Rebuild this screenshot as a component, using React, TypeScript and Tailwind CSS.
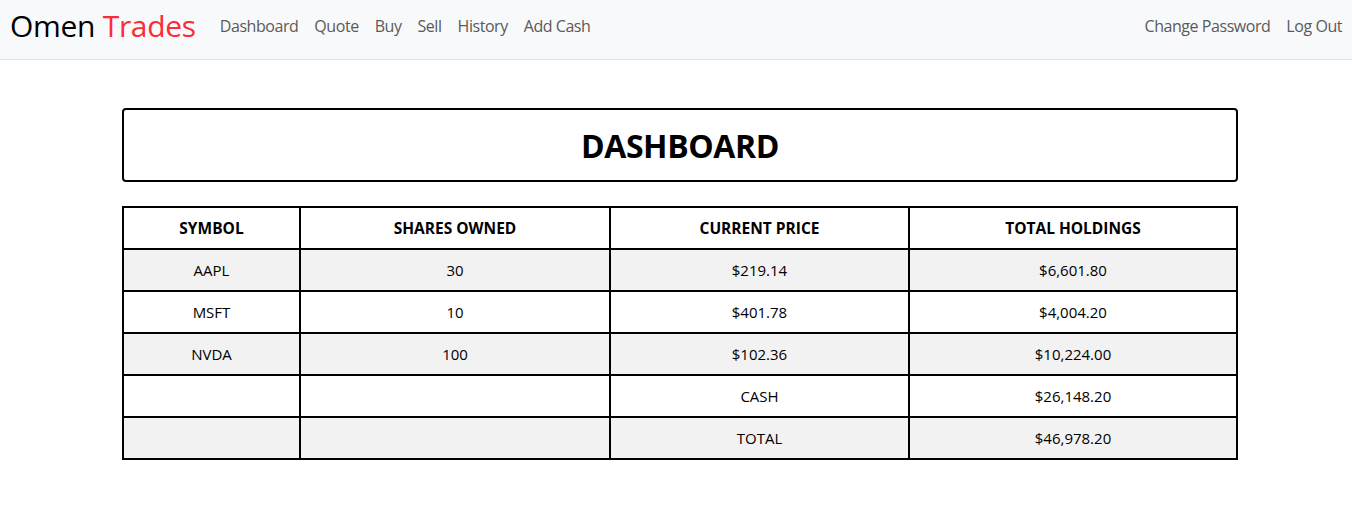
import React from "react";

const font = { fontFamily: '"Segoe UI", "Open Sans", "Noto Sans", sans-serif' };

const rows = [
  ["AAPL", "30", "$219.14", "$6,601.80"],
  ["MSFT", "10", "$401.78", "$4,004.20"],
  ["NVDA", "100", "$102.36", "$10,224.00"],
  ["", "", "CASH", "$26,148.20"],
  ["", "", "TOTAL", "$46,978.20"],
];

const leftLinks = ["Dashboard", "Quote", "Buy", "Sell", "History", "Add Cash"];

export default function App() {
  return (
    <div className="min-h-[525px] bg-white text-black" style={font}>
      <nav className="flex h-[60px] items-center justify-between border-b border-[#dee2e6] bg-[#f8f9fa] pb-[8px] pl-[10px] pr-[10px]">
        <div className="flex items-center">
          <span className="mr-[16px] text-[30px] leading-none tracking-[-0.3px]">
            Omen <span className="text-red-500">Trades</span>
          </span>
          <ul className="flex items-center">
            {leftLinks.map((l) => (
              <li key={l}>
                <a className="block px-[8px] text-[16px] text-[#5a5a5a] tracking-[-0.45px]">{l}</a>
              </li>
            ))}
          </ul>
        </div>
        <ul className="flex items-center">
          <li>
            <a className="block px-[8px] text-[16px] text-[#5a5a5a] tracking-[-0.45px]">Change Password</a>
          </li>
          <li>
            <a className="block pl-[8px] text-[16px] text-[#5a5a5a] tracking-[-0.45px]">Log Out</a>
          </li>
        </ul>
      </nav>

      <main className="ml-[122px] w-[1116px] pt-[48px]">
        <div className="flex h-[74px] items-center justify-center rounded-[4px] border-2 border-black pt-[2px]">
          <h1 className="text-[32px] font-bold tracking-[-0.4px]">DASHBOARD</h1>
        </div>

        <table className="mt-[24px] w-full border-collapse border-2 border-black text-center text-[15px]">
          <thead>
            <tr className="h-[42px]">
              <th className="w-[177px] border-2 border-black pt-[1px] text-[15.5px] font-bold">SYMBOL</th>
              <th className="w-[310px] border-2 border-black pt-[1px] text-[15.5px] font-bold">SHARES OWNED</th>
              <th className="w-[299px] border-2 border-black pt-[1px] text-[15.5px] font-bold">CURRENT PRICE</th>
              <th className="border-2 border-black pt-[1px] text-[15.5px] font-bold">TOTAL HOLDINGS</th>
            </tr>
          </thead>
          <tbody>
            {rows.map((r, i) => (
              <tr key={i} className={i % 2 === 0 ? "h-[42px] bg-[#f2f2f2]" : "h-[42px] bg-white"}>
                {r.map((c, j) => (
                  <td key={j} className="border-2 border-black">
                    {c}
                  </td>
                ))}
              </tr>
            ))}
          </tbody>
        </table>
      </main>
    </div>
  );
}
